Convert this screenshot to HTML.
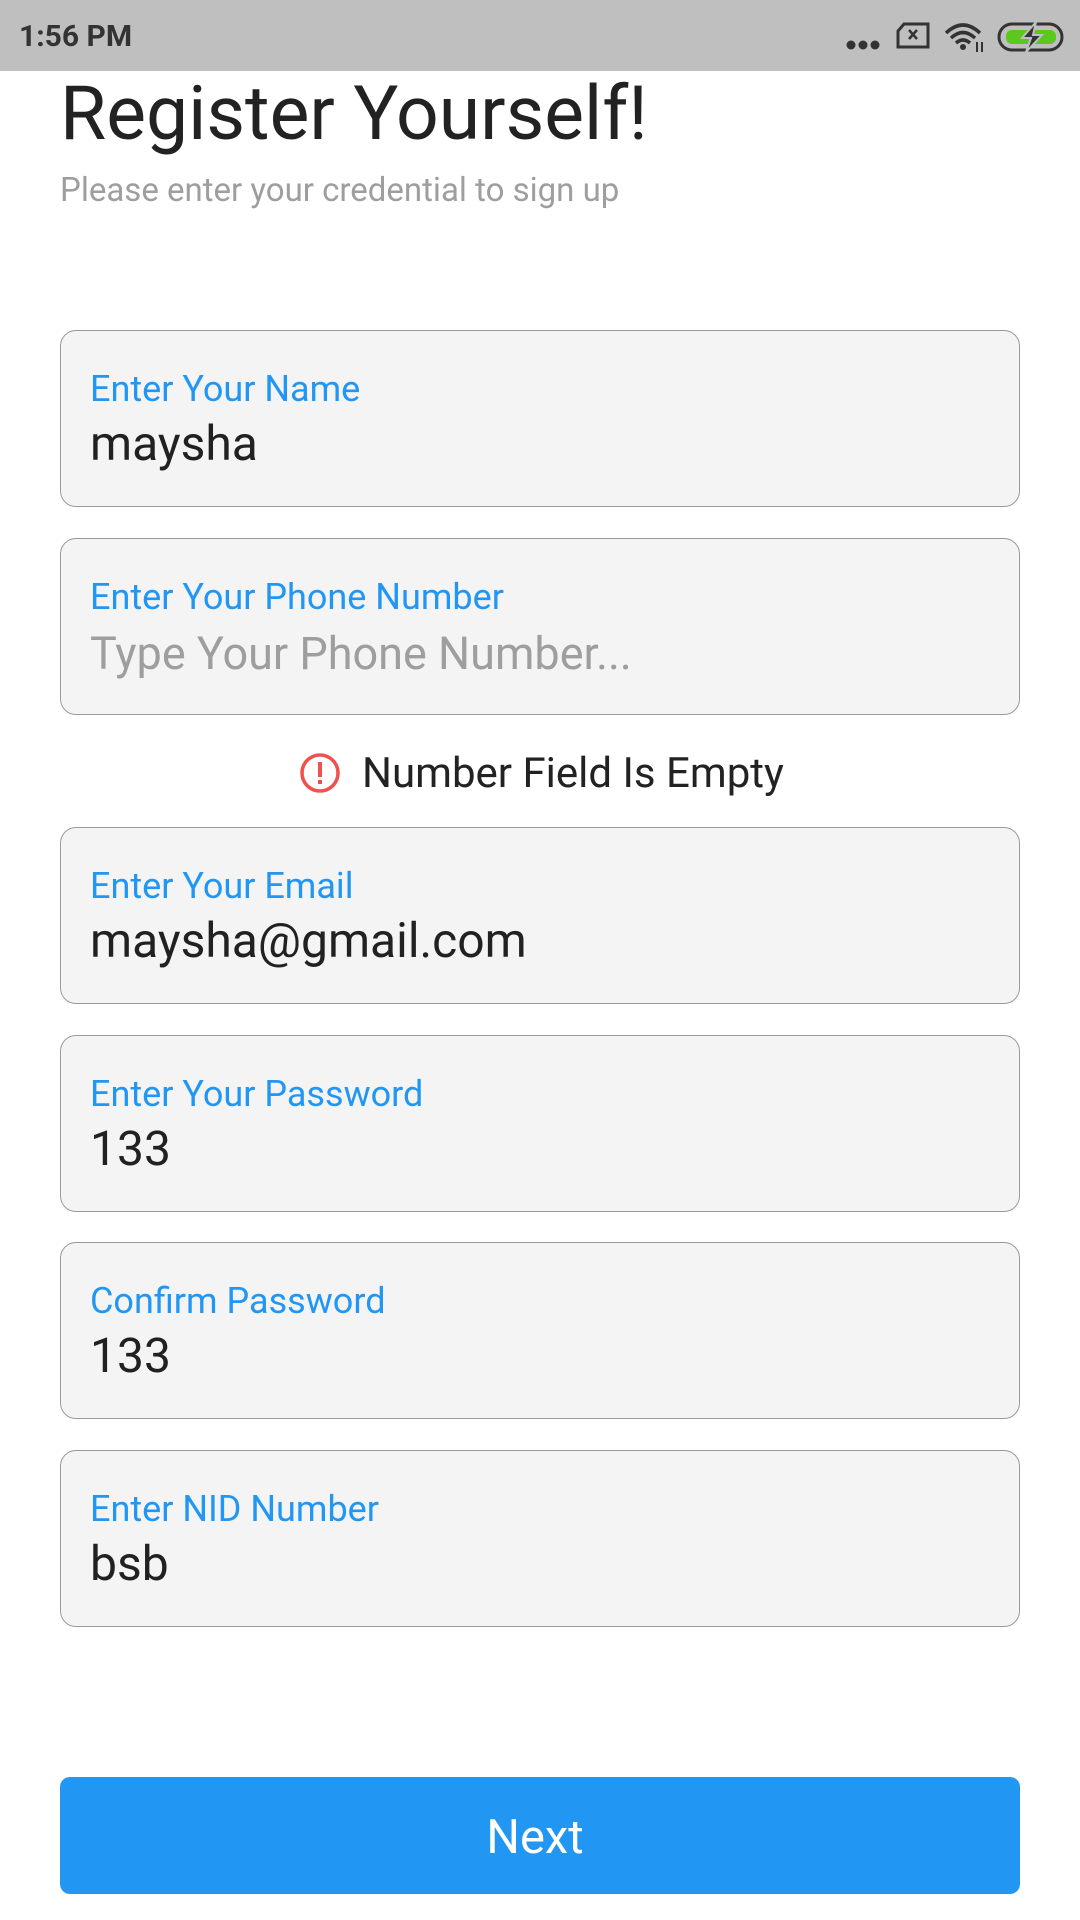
<!DOCTYPE html>
<html><head><meta charset="utf-8"><style>
*{margin:0;padding:0;box-sizing:border-box}
body{width:1080px;height:1920px;background:#fff;position:relative;overflow:hidden;font-family:"Roboto","Liberation Sans",sans-serif}
.a{position:absolute;line-height:1;white-space:nowrap}
.bar{position:absolute;left:0;top:0;width:1080px;height:71px;background:#bfbfbf}
.box{position:absolute;left:60px;width:960px;height:177px;background:#f4f4f4;border:1.5px solid #9a9a9a;border-radius:16px}
.lab{position:absolute;left:29px;top:40px;font-size:36px;color:#2196f3;line-height:1;white-space:nowrap}
.val{position:absolute;left:29px;top:89px;font-size:48px;color:#212121;line-height:1;white-space:nowrap}
.ph{color:#9e9e9e;font-size:45px;top:92px}
</style></head><body>
<div class="bar"></div>
<div class="a" style="left:19px;top:22px;font-size:30px;font-weight:bold;color:#333">1:56 PM</div>
<svg style="position:absolute;left:840px;top:18px" width="230" height="40" viewBox="840 18 230 40">
<circle cx="851" cy="45" r="4.5" fill="#333"/><circle cx="863" cy="45" r="4.5" fill="#333"/><circle cx="875" cy="45" r="4.5" fill="#333"/>
<path d="M904 24 H928 V47 H898 V31 Z" fill="none" stroke="#333" stroke-width="3"/>
<path d="M909 30 L917 39 M917 30 L909 39" stroke="#333" stroke-width="2.5"/>
<path d="M946 33 Q963 17 980 33" fill="none" stroke="#333" stroke-width="3.5"/>
<path d="M951 38 Q963 27 975 38" fill="none" stroke="#333" stroke-width="3.5"/>
<path d="M956 43 Q963 37 970 43" fill="none" stroke="#333" stroke-width="3.5"/>
<circle cx="963" cy="47" r="3" fill="#333"/>
<path d="M977 42 V52 M982 42 V52" stroke="#333" stroke-width="2"/>
<rect x="999" y="24" width="63" height="26" rx="13" fill="none" stroke="#333" stroke-width="3"/>
<rect x="1006" y="30" width="50" height="14" rx="6" fill="#5ac81e"/>
<path d="M1036 22 L1022 38 H1031 L1026 52 L1042 35 H1033 Z" fill="#333" stroke="#bfbfbf" stroke-width="2"/>
</svg>
<div class="a" style="left:60px;top:77px;font-size:75px;color:#222">Register Yourself!</div>
<div class="a" style="left:60px;top:174px;font-size:33px;color:#9e9e9e">Please enter your credential to sign up</div>

<div class="box" style="top:330px"><div class="lab">Enter Your Name</div><div class="val">maysha</div></div>
<div class="box" style="top:538px"><div class="lab">Enter Your Phone Number</div><div class="val ph">Type Your Phone Number...</div></div>
<svg style="position:absolute;left:298px;top:751px" width="44" height="44" viewBox="0 0 44 44"><circle cx="22" cy="22" r="18" fill="none" stroke="#f05050" stroke-width="3.5"/><rect x="20" y="11" width="4" height="15" fill="#f05050"/><rect x="20" y="29" width="4" height="4" fill="#f05050"/></svg>
<div class="a" style="left:362px;top:753px;font-size:42px;color:#222">Number Field Is Empty</div>
<div class="box" style="top:827px"><div class="lab">Enter Your Email</div><div class="val">maysha@gmail.com</div></div>
<div class="box" style="top:1035px"><div class="lab">Enter Your Password</div><div class="val">133</div></div>
<div class="box" style="top:1242px"><div class="lab">Confirm Password</div><div class="val">133</div></div>
<div class="box" style="top:1450px"><div class="lab">Enter NID Number</div><div class="val">bsb</div></div>

<div style="position:absolute;left:60px;top:1777px;width:960px;height:117px;background:#2196f3;border-radius:10px"></div>
<div class="a" style="left:0;width:1070px;text-align:center;top:1814px;font-size:47px;color:#fff">Next</div>
</body></html>
